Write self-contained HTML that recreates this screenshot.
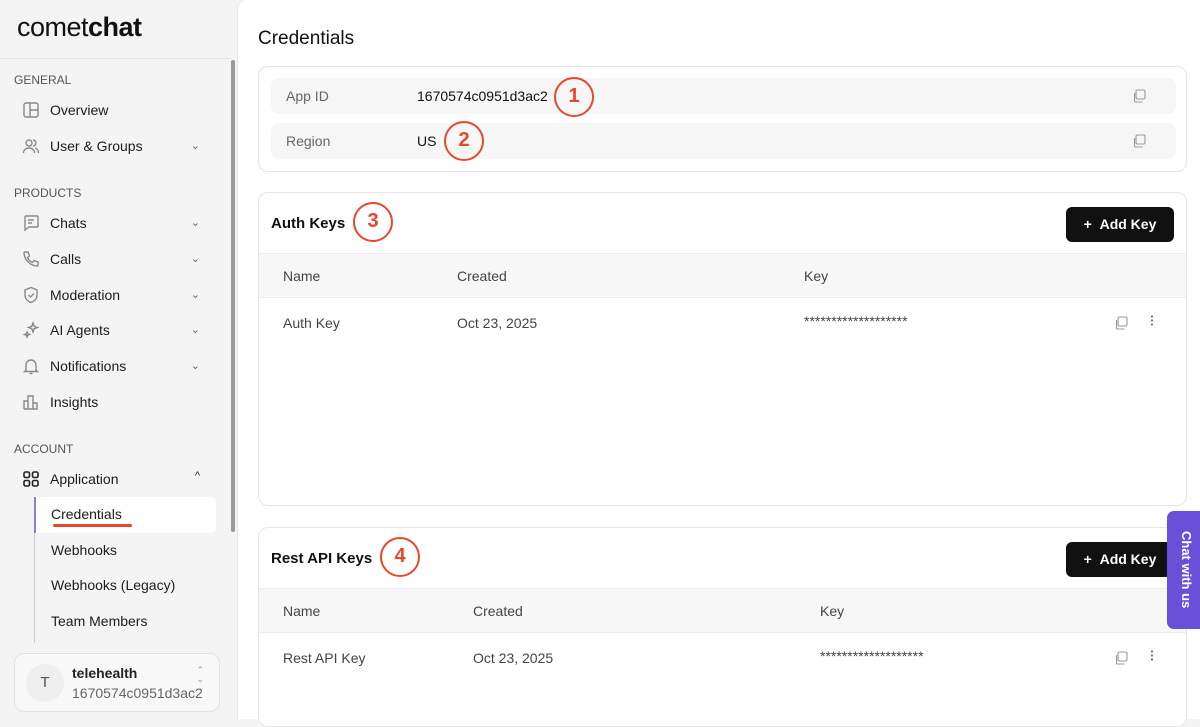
<!DOCTYPE html>
<html><head><meta charset="utf-8"><style>
*{box-sizing:border-box;margin:0;padding:0}
body{width:1200px;height:719px;overflow:hidden;font-family:"Liberation Sans",sans-serif;background:#f4f4f4;position:relative;color:#141414}
.side{position:absolute;left:0;top:0;width:237px;height:719px;background:#f4f4f4}
.logo{position:absolute;left:17px;top:12px;font-size:27px;letter-spacing:-0.5px;color:#111}
.logo b{font-weight:700}
.hr{position:absolute;left:0;top:58px;width:232px;border-top:1px solid #e4e4e4}
.sb{position:absolute;left:231px;top:60px;width:4px;height:472px;background:#9a9a9a;border-radius:2px}
.sec{position:absolute;left:14px;font-size:12px;color:#555}
.it{position:absolute;left:22px;font-size:14px;color:#1c1c1c;display:flex;align-items:center;width:180px}
.it svg{width:18px;height:18px;margin-right:10px;stroke:#888;fill:none;stroke-width:1.4}
.it .ch{position:absolute;right:2px;top:2px;font-size:11px;color:#666}
.sub{position:absolute;left:51px;font-size:14px;color:#1c1c1c}
.vl{position:absolute;left:34px;top:497px;height:146px;border-left:1px solid #cfcfcf}
.act{position:absolute;left:34px;top:497px;width:182px;height:36px;background:#fff;border-left:2px solid #8b7fd6;border-radius:0 6px 6px 0}
.ul{position:absolute;left:53px;top:524px;width:79px;height:3px;background:#e8482a;border-radius:2px}
.acct{position:absolute;left:14px;top:653px;width:206px;height:59px;background:#f8f8f8;border:1px solid #e2e2e2;border-radius:10px}
.av{position:absolute;left:11px;top:10px;width:38px;height:38px;border-radius:50%;background:#efefef;text-align:center;line-height:38px;font-size:15px;color:#555}
.main{position:absolute;left:237px;top:0;width:963px;height:719px;background:#fff;border-left:1px solid #e6e6e6;border-top-left-radius:10px}
h1{position:absolute;left:20px;top:28px;font-size:19px;font-weight:400;color:#111}
.card{position:absolute;left:20px;width:929px;border:1px solid #e6e6e6;border-radius:10px;background:#fff}
.row{position:absolute;left:12px;width:905px;height:36px;background:#f6f6f6;border-radius:8px;font-size:14px}
.row .l{position:absolute;left:15px;top:10px;color:#666}
.row .v{position:absolute;left:146px;top:10px;color:#111}
.cp{position:absolute;width:14px;height:14px}
.circ{position:absolute;width:40px;height:40px;border:2.5px solid #e8482a;border-radius:50%;color:#e8482a;font-weight:700;font-size:20px;text-align:center;line-height:35px}
.ct{position:absolute;left:12px;font-size:15px;font-weight:700;color:#111}
.btn{position:absolute;right:12px;width:108px;height:35px;background:#111;border-radius:6px;color:#fff;font-size:14px;font-weight:700;text-align:center;line-height:35px}
.th{position:absolute;left:0;width:927px;height:45px;background:#f7f7f7;border-top:1px solid #eee;border-bottom:1px solid #eee;font-size:14px;color:#444}
.th span,.tr span{position:absolute;top:14px}
.tr{position:absolute;left:0;width:927px;height:48px;font-size:14px;color:#444}
.dots{position:absolute;color:#777;font-size:14px;font-weight:700;line-height:4px;width:4px}
.chat{position:absolute;left:1167px;top:511px;width:36px;height:118px;background:#6a4fd8;border-radius:7px 0 0 7px;color:#fff;font-size:13px;font-weight:700;writing-mode:vertical-rl;text-align:center;line-height:34px}
</style></head><body>
<div class="side">
<div class="logo">comet<b>chat</b></div>
<div class="hr"></div>
<div class="sb"></div>
<div class="sec" style="top:73px">GENERAL</div>
<div class="it" style="top:101px"><svg viewBox="0 0 18 18"><rect x="2" y="2" width="14" height="14" rx="2"/><path d="M8 2v14M8 9h8"/></svg>Overview</div>
<div class="it" style="top:137px"><svg viewBox="0 0 18 18"><circle cx="7" cy="6" r="3"/><path d="M1.5 16c0-3 2.5-5 5.5-5s5.5 2 5.5 5M11 3a3 3 0 010 6M13 11c2 .5 3.5 2.5 3.5 5"/></svg>User &amp; Groups<span class="ch">⌄</span></div>
<div class="sec" style="top:186px">PRODUCTS</div>
<div class="it" style="top:214px"><svg viewBox="0 0 18 18"><path d="M3 2h12a1 1 0 011 1v9a1 1 0 01-1 1H7l-4 3V3a1 1 0 011-1z"/><path d="M6 6h6M6 9h4"/></svg>Chats<span class="ch">⌄</span></div>
<div class="it" style="top:250px"><svg viewBox="0 0 18 18"><path d="M3 2h3l1.5 4-2 1.5a9 9 0 005 5l1.5-2 4 1.5v3a1 1 0 01-1 1A14 14 0 012 3a1 1 0 011-1z"/></svg>Calls<span class="ch">⌄</span></div>
<div class="it" style="top:286px"><svg viewBox="0 0 18 18"><path d="M9 1.5l6 2.5v5c0 4-3 6.5-6 7.5-3-1-6-3.5-6-7.5V4z"/><path d="M6.5 9l2 2 3.5-3.5"/></svg>Moderation<span class="ch">⌄</span></div>
<div class="it" style="top:321px"><svg viewBox="0 0 18 18"><path d="M11 2l1.2 3.3L15.5 6.5 12.2 7.7 11 11 9.8 7.7 6.5 6.5 9.8 5.3z"/><path d="M5 11l.7 1.8 1.8.7-1.8.7L5 16l-.7-1.8-1.8-.7 1.8-.7z"/></svg>AI Agents<span class="ch">⌄</span></div>
<div class="it" style="top:357px"><svg viewBox="0 0 18 18"><path d="M4 13V8a5 5 0 0110 0v5l1.5 1.5h-13zM7.5 16.5h3"/></svg>Notifications<span class="ch">⌄</span></div>
<div class="it" style="top:393px"><svg viewBox="0 0 18 18"><path d="M2 16V8h4v8M6 16V3h5v13M11 16V10h4v6H2"/></svg>Insights</div>
<div class="sec" style="top:442px">ACCOUNT</div>
<div class="it" style="top:470px"><svg viewBox="0 0 18 18" style="stroke:#222;stroke-width:1.6"><rect x="2" y="2" width="5.5" height="5.5" rx="1.5"/><rect x="10.5" y="2" width="5.5" height="5.5" rx="1.5"/><rect x="2" y="10.5" width="5.5" height="5.5" rx="1.5"/><rect x="10.5" y="10.5" width="5.5" height="5.5" rx="1.5"/></svg>Application<span class="ch" style="top:0;color:#222">^</span></div>
<div class="vl"></div>
<div class="act"></div>
<div class="sub" style="top:506px">Credentials</div>
<div class="ul"></div>
<div class="sub" style="top:542px">Webhooks</div>
<div class="sub" style="top:577px">Webhooks (Legacy)</div>
<div class="sub" style="top:613px">Team Members</div>
<div class="acct"><div class="av">T</div>
<div style="position:absolute;left:57px;top:11px;font-size:14px;font-weight:700;color:#222">telehealth</div>
<div style="position:absolute;left:57px;top:31px;font-size:14px;color:#666">1670574c0951d3ac2</div>
<div style="position:absolute;right:15px;top:12px;font-size:9px;color:#999;line-height:9px">⌃<br>⌄</div></div>
</div>
<div class="main">
<h1>Credentials</h1>
<div class="card" style="top:66px;height:106px">
<div class="row" style="top:11px"><span class="l">App ID</span><span class="v">1670574c0951d3ac2</span>
<svg class="cp" style="right:30px;top:11px" viewBox="0 0 14 14" fill="none" stroke="#999" stroke-width="1.1"><rect x="4" y="1" width="9" height="9" rx="1.5"/><path d="M2.5 4v8a1 1 0 001 1h7"/></svg></div>
<div class="row" style="top:56px"><span class="l">Region</span><span class="v">US</span>
<svg class="cp" style="right:30px;top:11px" viewBox="0 0 14 14" fill="none" stroke="#999" stroke-width="1.1"><rect x="4" y="1" width="9" height="9" rx="1.5"/><path d="M2.5 4v8a1 1 0 001 1h7"/></svg></div>
<div class="circ" style="left:295px;top:10px">1</div>
<div class="circ" style="left:185px;top:54px">2</div>
</div>
<div class="card" style="top:192px;height:314px">
<div class="ct" style="top:22px">Auth Keys</div>
<div class="circ" style="left:94px;top:9px">3</div>
<div class="btn" style="top:14px">+&nbsp;&nbsp;Add Key</div>
<div class="th" style="top:60px"><span style="left:24px">Name</span><span style="left:198px">Created</span><span style="left:545px">Key</span></div>
<div class="tr" style="top:108px"><span style="left:24px">Auth Key</span><span style="left:198px">Oct 23, 2025</span><span style="left:545px;top:12px">*******************</span>
<svg class="cp" style="left:855px;top:15px" viewBox="0 0 14 14" fill="none" stroke="#999" stroke-width="1.1"><rect x="4" y="1" width="9" height="9" rx="1.5"/><path d="M2.5 4v8a1 1 0 001 1h7"/></svg>
<div class="dots" style="left:891px;top:13px">·<br>·<br>·</div></div>
</div>
<div class="card" style="top:527px;height:200px">
<div class="ct" style="top:22px">Rest API Keys</div>
<div class="circ" style="left:121px;top:9px">4</div>
<div class="btn" style="top:14px">+&nbsp;&nbsp;Add Key</div>
<div class="th" style="top:60px"><span style="left:24px">Name</span><span style="left:214px">Created</span><span style="left:561px">Key</span></div>
<div class="tr" style="top:108px"><span style="left:24px">Rest API Key</span><span style="left:214px">Oct 23, 2025</span><span style="left:561px;top:12px">*******************</span>
<svg class="cp" style="left:855px;top:15px" viewBox="0 0 14 14" fill="none" stroke="#999" stroke-width="1.1"><rect x="4" y="1" width="9" height="9" rx="1.5"/><path d="M2.5 4v8a1 1 0 001 1h7"/></svg>
<div class="dots" style="left:891px;top:13px">·<br>·<br>·</div></div>
</div>
</div>
<div class="chat">Chat with us</div>
</body></html>
